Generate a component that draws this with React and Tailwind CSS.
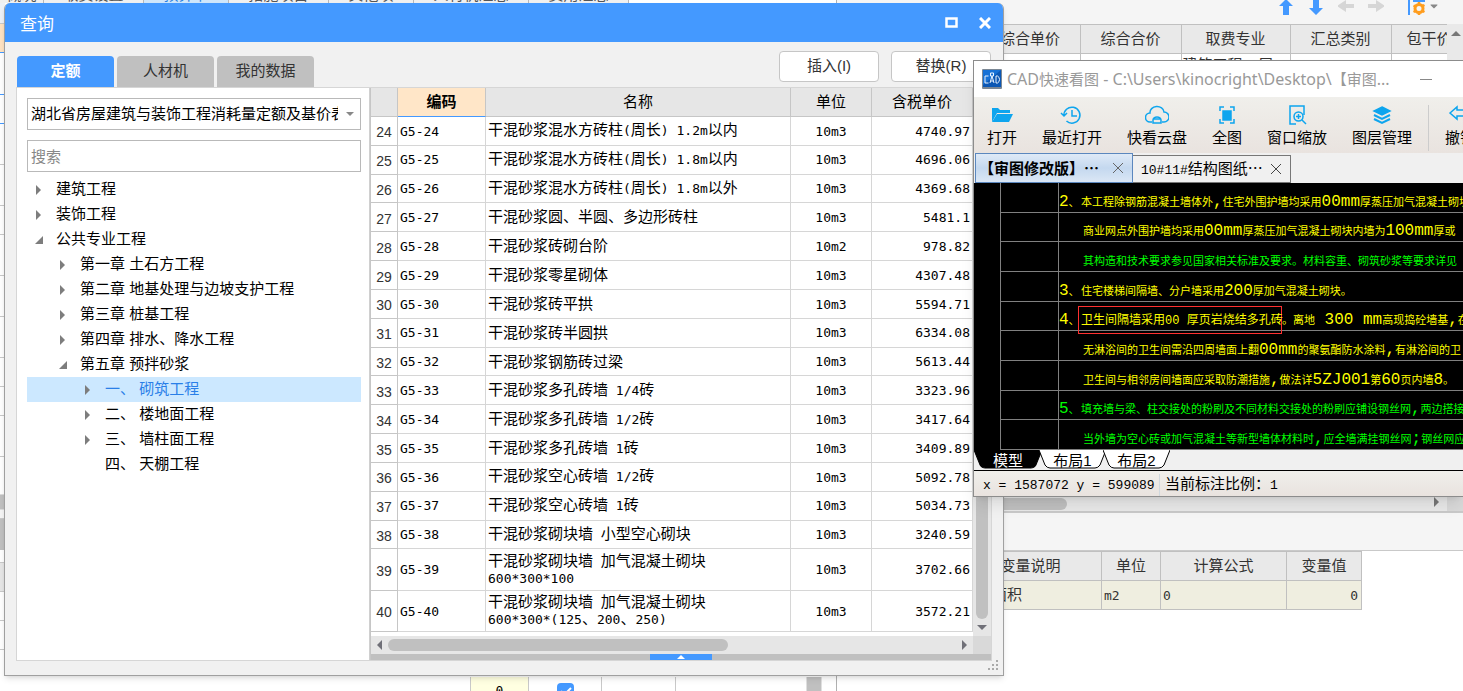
import { FaCaretDown } from "react-icons/fa";

const leftRows = [
  { h: "h-6", bg: "bg-[#eef1f6] border-[#c9c9c9]" },
  { h: "h-[29px]", bg: "bg-[#ffe3c2] border-[#4499ff]" },
  { h: "h-[42px]", bg: "bg-white border-[#4499ff]" },
  { h: "h-[29px]", bg: "bg-white border-[#4499ff]" },
  { h: "h-[41px]", bg: "bg-white border-[#c9c9c9]" },
  { h: "h-[41px]", bg: "bg-white border-[#c9c9c9]" },
  { h: "h-[29px]", bg: "bg-white border-[#c9c9c9]" },
  { h: "h-[41px]", bg: "bg-white border-[#c9c9c9]" },
  { h: "h-[41px]", bg: "bg-white border-[#c9c9c9]" },
  { h: "h-[41px]", bg: "bg-white border-[#c9c9c9]" },
  { h: "h-[29px]", bg: "bg-white border-[#c9c9c9]" },
  { h: "h-[29px]", bg: "bg-white border-[#c9c9c9]" },
  { h: "h-[41px]", bg: "bg-white border-[#c9c9c9]" },
  { h: "h-[38px]", bg: "bg-white border-[#dcdcdc]" },
  { h: "h-[15px]", bg: "bg-[#c0c0c0] border-[#dcdcdc]" },
  { h: "h-[9px]", bg: "bg-[#f5f5f5] border-[#c9c9c9]" },
  { h: "h-[31px]", bg: "bg-[#c0c0c0] border-[#c0c0c0]" },
  { h: "h-[13px]", bg: "bg-white border-[#c9c9c9]" },
  { h: "h-[29px]", bg: "bg-[#e6e6e6] border-[#c9c9c9]" },
  { h: "h-[29px]", bg: "bg-white border-[#c9c9c9]" },
  { h: "h-[29px]", bg: "bg-white border-[#c9c9c9]" },
  { h: "h-[29px]", bg: "bg-white border-[#c9c9c9]" },
];

const sheetTabs = [
  { name: "概况", w: "w-11" },
  { name: "取费设置", w: "w-[100px]" },
  { name: "预算书", w: "w-[85px]", active: true },
  { name: "措施项目", w: "w-[100px]" },
  { name: "其他项", w: "w-[85px]" },
  { name: "人材机汇总", w: "w-[115px]" },
  { name: "费用汇总", w: "w-[100px]" },
];

const tree = [
  { text: "建筑工程", level: 0, state: "closed" },
  { text: "装饰工程", level: 0, state: "closed" },
  { text: "公共专业工程", level: 0, state: "open" },
  { text: "第一章 土石方工程", level: 1, state: "closed" },
  { text: "第二章 地基处理与边坡支护工程", level: 1, state: "closed" },
  { text: "第三章 桩基工程", level: 1, state: "closed" },
  { text: "第四章 排水、降水工程", level: 1, state: "closed" },
  { text: "第五章 预拌砂浆", level: 1, state: "open" },
  { text: "一、 砌筑工程", level: 2, state: "closed", selected: true },
  { text: "二、 楼地面工程", level: 2, state: "closed" },
  { text: "三、 墙柱面工程", level: 2, state: "closed" },
  { text: "四、 天棚工程", level: 2, state: "leaf" },
];

const indents = ["pl-2", "pl-8", "pl-[57px]"];

const quotas = [
  [24, "G5-24", ["干混砂浆混水方砖柱(周长) 1.2m以内"], "10m3", "4740.97"],
  [25, "G5-25", ["干混砂浆混水方砖柱(周长) 1.8m以内"], "10m3", "4696.06"],
  [26, "G5-26", ["干混砂浆混水方砖柱(周长) 1.8m以外"], "10m3", "4369.68"],
  [27, "G5-27", ["干混砂浆圆、半圆、多边形砖柱"], "10m3", "5481.1"],
  [28, "G5-28", ["干混砂浆砖砌台阶"], "10m2", "978.82"],
  [29, "G5-29", ["干混砂浆零星砌体"], "10m3", "4307.48"],
  [30, "G5-30", ["干混砂浆砖平拱"], "10m3", "5594.71"],
  [31, "G5-31", ["干混砂浆砖半圆拱"], "10m3", "6334.08"],
  [32, "G5-32", ["干混砂浆钢筋砖过梁"], "10m3", "5613.44"],
  [33, "G5-33", ["干混砂浆多孔砖墙 1/4砖"], "10m3", "3323.96"],
  [34, "G5-34", ["干混砂浆多孔砖墙 1/2砖"], "10m3", "3417.64"],
  [35, "G5-35", ["干混砂浆多孔砖墙 1砖"], "10m3", "3409.89"],
  [36, "G5-36", ["干混砂浆空心砖墙 1/2砖"], "10m3", "5092.78"],
  [37, "G5-37", ["干混砂浆空心砖墙 1砖"], "10m3", "5034.73"],
  [38, "G5-38", ["干混砂浆砌块墙 小型空心砌块"], "10m3", "3240.59"],
  [39, "G5-39", ["干混砂浆砌块墙 加气混凝土砌块", "600*300*100"], "10m3", "3702.66"],
  [40, "G5-40", ["干混砂浆砌块墙 加气混凝土砌块", "600*300*(125、200、250)"], "10m3", "3572.21"],
];

const notes = [
  { no: "2、", text: "本工程除钢筋混凝土墙体外,住宅外围护墙均采用00mm厚蒸压加气混凝土砌块" },
  { text: "商业网点外围护墙均采用00mm厚蒸压加气混凝土砌块内墙为100mm厚或" },
  { text: "其构造和技术要求参见国家相关标准及要求。材料容重、砌筑砂浆等要求详见", green: true },
  { no: "3、", text: "住宅楼梯间隔墙、分户墙采用200厚加气混凝土砌块。" },
  { no: "4、", boxed: "卫生间隔墙采用00 厚页岩烧结多孔砖", text: "。离地 300 mm高现捣砼墙基,在" },
  { text: "无淋浴间的卫生间需沿四周墙面上翻00mm的聚氨酯防水涂料,有淋浴间的卫" },
  { text: "卫生间与相邻房间墙面应采取防潮措施,做法详5ZJ001第60页内墙8。" },
  { no: "5、", text: "填充墙与梁、柱交接处的粉刷及不同材料交接处的粉刷应铺设钢丝网,两边搭接", green: true },
  { text: "当外墙为空心砖或加气混凝土等新型墙体材料时,应全墙满挂钢丝网;钢丝网应", green: true },
];

// Latin runs are set in a monospace face, the rest in the CJK face
function Mixed({ text, className = "font-['DejaVu_Sans_Mono',monospace] text-[13px]" }) {
  return text.split(/([\x20-\x7e]+)/).map((part, i) =>
    i % 2 ? (
      <span key={i} className={`whitespace-pre ${className}`}>{part}</span>
    ) : (
      part
    )
  );
}

function Arrow({ className, d }) {
  return (
    <svg viewBox="0 0 16 16" className={`h-4 w-4 ${className}`} fill="currentColor">
      <path d={d} />
    </svg>
  );
}

function Workbook() {
  const head = "border-r border-b border-t border-[#c0c0c0] font-normal";
  return (
    <div className="flex h-full">
      <div className="flex w-[837px] shrink-0 flex-col border-r border-[#b0b0b0]">
        <div className="flex min-h-0 flex-1">
          <div className="w-[5px] shrink-0 overflow-hidden">
            {leftRows.map((r, i) => (
              <div key={i} className={`border-b ${r.h} ${r.bg}`} />
            ))}
          </div>
          <div className="-ml-[5px] flex h-[3px] overflow-hidden bg-[#f0f0f0] text-[15px]">
            {sheetTabs.map((t) => (
              <div key={t.name} className={`flex shrink-0 items-end justify-center border-r border-[#b8b8b8] ${t.w} ${t.active ? "bg-[#cfe6fb] text-[#2a7fe0]" : "text-[#555]"}`}>
                <span className="leading-4">{t.name}</span>
              </div>
            ))}
          </div>
        </div>
        <div className="flex h-[14px] overflow-hidden">
          <div className="w-[471px] border-r border-[#c9c9c9]" />
          <div className="w-[58px] border-r border-[#c9c9c9] bg-[#ffffe1] pt-1 text-center font-['DejaVu_Sans_Mono',monospace] text-[13px]">0</div>
          <div className="flex w-[73px] justify-center border-r border-[#c9c9c9] pt-[6px]">
            <label className="flex h-[17px] w-[17px] shrink-0 rounded-sm bg-[#4499ff]">
              <input type="checkbox" defaultChecked aria-label="汇总" className="peer sr-only" />
              <svg viewBox="0 0 17 17" className="h-[17px] w-[17px]" fill="none" stroke="white" strokeWidth="2">
                <path d="M4 8l3 4 7-7" />
              </svg>
            </label>
          </div>
          <div className="w-[74px] border-r border-[#c9c9c9]" />
          <div className="mr-[14px] ml-auto w-4 border-x border-[#e0e0e0] bg-[#c0c0c0]" />
        </div>
      </div>

      <div className="flex min-w-0 flex-1 flex-col">
        <div className="flex h-6 items-start justify-end bg-[#f5f5f5]">
          <Arrow className="mr-[14px] text-[#4499ff]" d="M8 -1L15 6H11V15H5V6H1z" />
          <Arrow className="mr-[14px] text-[#4499ff]" d="M8 15L15 8H11V-1H5V8H1z" />
          <Arrow className="mr-[14px] text-[#d6d6d6]" d="M-1 6L8 0V4H17V8H8V12z" />
          <Arrow className="mr-6 text-[#d6d6d6]" d="M17 6L8 0V4H-1V8H8V12z" />
          <svg viewBox="0 0 18 16" className="mr-1 h-4 w-[18px]">
            <path d="M1 0v15M5 1h12" stroke="#4499ff" strokeWidth="2" />
            <circle cx="11" cy="8.5" r="4" fill="none" stroke="#ff9d1e" strokeWidth="3" />
            <path d="M11 2v3M11 12v3M5.500 5.500l2 1M14.500 11l2 1M5.500 12l2-1M14.500 6l2-1" stroke="#ff9d1e" strokeWidth="2.500" />
          </svg>
          <FaCaretDown className="mr-[25px] h-3 w-2 text-[#888]" />
        </div>
        <div className="flex h-[473px] overflow-hidden">
          <div className="min-w-0 flex-1 overflow-hidden">
            <table className="w-[654px] table-fixed border-collapse text-[15px] text-[#333]">
              <thead>
                <tr className="h-[29px] bg-[#e9e9e9]">
                  <th className={`w-[143px] ${head}`} />
                  <th className={`w-[100px] ${head}`}>综合单价</th>
                  <th className={`w-[101px] ${head}`}>综合合价</th>
                  <th className={`w-[109px] ${head}`}>取费专业</th>
                  <th className={`w-[101px] ${head}`}>汇总类别</th>
                  <th className={`w-[100px] ${head} pr-6`}>包干价</th>
                </tr>
              </thead>
              <tbody>
                <tr className="h-[29px] align-top">
                  <td className="border-r border-[#c0c0c0]" />
                  <td className="border-r border-[#c0c0c0]" />
                  <td className="border-r border-[#c0c0c0]" />
                  <td className="border-r border-[#c0c0c0] px-px"><Mixed text="建筑工程12层" /></td>
                  <td className="border-r border-[#c0c0c0]" />
                  <td />
                </tr>
              </tbody>
            </table>
          </div>
          <div className="w-4 bg-[#e9e9e9] pt-[7px]">
            <svg viewBox="0 0 10 5" className="mx-1 h-[5px] w-[10px]"><path d="M0 5L5 0l5 5z" fill="#777" /></svg>
          </div>
        </div>
        <div className="flex h-[14px] bg-[#e9e9e9]">
          <div className="my-px w-[230px] rounded-r-full bg-[#c0c0c0]" />
          <svg viewBox="0 0 5 10" className="ml-auto mr-2 h-[10px] w-[5px]"><path d="M0 0l5 5-5 5z" fill="#777" /></svg>
          <div className="w-4 bg-[#d9d9d9]" />
        </div>
        <div className="h-10 border-t-2 border-b border-[#c9c9c9] bg-[#f5f5f5]" />
        <table className="w-[525px] table-fixed border-collapse text-[15px] text-[#333]">
          <thead>
            <tr className="h-[29px] bg-[#e9e9e9]">
              <th className={`w-[122px] ${head}`} />
              <th className={`w-[142px] ${head}`}>变量说明</th>
              <th className={`w-[59px] ${head}`}>单位</th>
              <th className={`w-[126px] ${head}`}>计算公式</th>
              <th className={`w-[75px] ${head}`}>变量值</th>
            </tr>
          </thead>
          <tbody>
            <tr className="h-[29px] bg-[#efeee0]">
              <td className="border border-[#c0c0c0]" />
              <td className="border border-[#c0c0c0] px-[2px]">建筑面积</td>
              <td className="border border-[#c0c0c0] px-[2px]"><Mixed text="m2" /></td>
              <td className="border border-[#c0c0c0] px-[2px]"><Mixed text="0" /></td>
              <td className="border border-[#c0c0c0] px-[3px] text-right"><Mixed text="0" /></td>
            </tr>
          </tbody>
        </table>
      </div>
    </div>
  );
}

function TreeItem({ item }) {
  return (
    <li className={`flex h-[25px] items-center text-[15px] ${indents[item.level]} ${item.selected ? "bg-[#cce8ff] text-[#2a7fe8]" : "text-black"}`}>
      <svg viewBox="0 0 10 10" className="mr-[11px] h-[10px] w-[10px] shrink-0" fill="#7d7d7d">
        {item.state === "closed" && <path d="M1 0l5 5-5 5z" />}
        {item.state === "open" && <path d="M8 1v8H0z" />}
      </svg>
      <span className="whitespace-pre">{item.text}</span>
    </li>
  );
}

function QueryDialog() {
  const th = "border-r border-b border-[#c6c6c6] font-normal";
  const td = "border-r border-b border-[#d6d6d6] px-[2px] py-0";
  return (
    <section className="absolute top-[3px] left-1 flex h-[673px] w-[1000px] flex-col overflow-hidden rounded-t-md border-r border-b border-l border-[#a0a0a0] bg-[#f1f1f1] shadow-md">
      <header className="flex h-[39px] shrink-0 items-center bg-[#4499ff] pr-3 pl-[15px] text-white">
        <h1 className="flex-1 pt-1 text-[17px]">查询</h1>
        <button aria-label="最大化" className="mr-[21px]">
          <svg viewBox="0 0 13 11" className="h-[11px] w-[13px]"><path d="M1.500 1.500h10v8h-10z" fill="none" stroke="white" strokeWidth="2.500" /></svg>
        </button>
        <button aria-label="关闭">
          <svg viewBox="0 0 12 12" className="h-3 w-3"><path d="M1 1l10 10M11 1L1 11" stroke="white" strokeWidth="3" /></svg>
        </button>
      </header>
      <div className="flex h-[45px] shrink-0 items-end pr-3 pl-3 text-[15px]">
        <button className="mr-[3px] h-[31px] w-[97px] rounded-t-sm bg-[#4499ff] font-bold text-white">定额</button>
        <button className="mr-[3px] h-[31px] w-[97px] rounded-t-sm bg-[#c0c0c0] text-[#333]">人材机</button>
        <button className="h-[31px] w-[97px] rounded-t-sm bg-[#c0c0c0] text-[#333]">我的数据</button>
        <button className="mr-3 mb-[5px] ml-auto h-[31px] w-[100px] rounded-sm border border-[#c6c6c6] bg-white text-[#333]">插入(I)</button>
        <button className="mb-[5px] h-[31px] w-[100px] rounded-sm border border-[#c6c6c6] bg-white text-[#333]">替换(R)</button>
      </div>
      <div className="mr-[11px] mb-[14px] ml-[11px] flex min-h-0 flex-1 border border-[#d6d6d6] bg-white">
        <div className="w-[353px] shrink-0 border-r border-[#d0d0d0] pt-[10px] pr-2 pl-[10px]">
          <div className="relative">
            <select aria-label="定额库" className="h-8 w-full appearance-none overflow-hidden border border-[#b9b9b9] bg-white pr-[22px] pl-[3px] text-[15px] text-black">
              <option>湖北省房屋建筑与装饰工程消耗量定额及基价表</option>
            </select>
            <svg viewBox="0 0 8 4" className="pointer-events-none absolute top-[14px] right-[7px] h-1 w-2"><path d="M0 0h8L4 4z" fill="#888" /></svg>
          </div>
          <input aria-label="搜索" placeholder="搜索" className="mt-[10px] block h-8 w-full border border-[#b9b9b9] bg-white px-[3px] text-[15px] placeholder:text-[#888]" />
          <ul className="mt-[5px]">
            {tree.map((item) => (
              <TreeItem key={item.text} item={item} />
            ))}
          </ul>
        </div>
        <div className="flex min-w-0 flex-1 flex-col border-l border-[#c6c6c6]">
          <div className="flex min-h-0 flex-1">
            <div className="min-w-0 flex-1 pb-1">
              <table className="h-full w-full table-fixed border-separate border-spacing-0 text-[15px] text-black">
                <thead>
                  <tr className="h-[29px] bg-[#e6e6e6]">
                    <th className={`w-[27px] ${th}`} />
                    <th className="w-[88px] border-r border-b border-r-[#c6c6c6] border-b-[#4499ff] bg-[#ffe6c8] font-bold">编码</th>
                    <th className={th}>名称</th>
                    <th className={`w-[81px] ${th}`}>单位</th>
                    <th className={`w-[101px] ${th}`}>含税单价</th>
                  </tr>
                </thead>
                <tbody>
                  {quotas.map(([no, code, name, unit, price]) => (
                    <tr key={no} className={name.length > 1 ? "h-10" : "h-7"}>
                      <td className="border-r border-b border-[#c6c6c6] px-0 pt-[3px] pb-0 text-center font-['Liberation_Sans',sans-serif] text-[14px] leading-5 text-[#333]">{no}</td>
                      <td className={td}><Mixed text={code} /></td>
                      <td className={td}>
                        {name.map((line) => (
                          <div key={line} className="leading-4 whitespace-nowrap"><Mixed text={line} /></div>
                        ))}
                      </td>
                      <td className={`${td} text-center`}><Mixed text={unit} /></td>
                      <td className={`${td} text-right`}><Mixed text={price} /></td>
                    </tr>
                  ))}
                </tbody>
              </table>
            </div>
            <div className="flex w-[18px] flex-col items-center bg-[#e6e6e6] pb-[6px]">
              <div className="mt-4 mb-[6px] w-3 flex-1 rounded-full bg-[#c0c0c0]" />
              <svg viewBox="0 0 10 5" className="h-[5px] w-[10px]"><path d="M0 0h10L5 5z" fill="#707078" /></svg>
            </div>
          </div>
          <div className="flex h-[18px] items-center bg-[#e6e6e6]">
            <svg viewBox="0 0 5 10" className="mx-[6px] h-[10px] w-[5px]"><path d="M5 0v10L0 5z" fill="#707078" /></svg>
            <div className="h-3 w-[340px] rounded-full bg-[#c0c0c0]" />
            <svg viewBox="0 0 5 10" className="mr-[6px] ml-auto h-[10px] w-[5px]"><path d="M0 0l5 5-5 5z" fill="#707078" /></svg>
            <div className="h-full w-[18px] bg-[#d9d9d9]" />
          </div>
          <button aria-label="展开" className="flex h-[6px] justify-center bg-[#c0c0c0]">
            <svg viewBox="0 0 62 6" className="h-[6px] w-[62px] bg-[#4499ff]"><path d="M27 5l4-4 4 4z" fill="white" /></svg>
          </button>
        </div>
      </div>
      <svg viewBox="0 0 11 11" className="absolute right-1 bottom-1 h-[11px] w-[11px]" fill="#aaa">
        <path d="M8 0h2v2H8zM4 4h2v2H4zM8 4h2v2H8zM0 8h2v2H0zM4 8h2v2H4zM8 8h2v2H8z" />
      </svg>
    </section>
  );
}

function Tool({ label, children }) {
  return (
    <button className="flex shrink-0 flex-col items-center text-[15px] leading-5 text-black">
      <svg viewBox="0 0 24 20" className="mb-[3px] h-5 w-6" fill="none" stroke="#0ea5ee" strokeWidth="1.500">
        {children}
      </svg>
      {label}
    </button>
  );
}

function SheetTab({ label, w, active }) {
  return (
    <button className={`relative -ml-[3px] h-[19px] text-[15px] leading-[22px] first:ml-0 ${w} ${active ? "text-white" : "text-black"}`}>
      <svg viewBox="0 0 67 19" preserveAspectRatio="none" className="absolute inset-0 h-full w-full" fill={active ? "black" : "white"} stroke="black">
        <path d="M0 0l6 15q2 3 5 3h45q3 0 5-3l6-15" />
      </svg>
      <span className="relative">{label}</span>
    </button>
  );
}

function CadNote({ note }) {
  const latin = "font-['Liberation_Mono',monospace] text-[16px]";
  return (
    <div className={`flex min-h-0 flex-1 text-[11px] leading-5 whitespace-nowrap ${note.green ? "text-[#00ff00]" : "text-[#ffff00]"}`}>
      <div className="w-[58px] shrink-0 border-r border-b border-[#808080]" />
      <div className="flex flex-1 items-end border-b border-[#808080]">
        <span className="w-[22px] shrink-0"><Mixed text={note.no || ""} className={latin} /></span>
        {note.boxed && (
          <span className="-mb-1 -ml-[3px] h-[28px] w-[204px] shrink-0 border border-[#ff3030] pl-[2px] text-[12px] leading-[26px]">
            <Mixed text={note.boxed} className="font-['Liberation_Mono',monospace] text-[12px]" />
          </span>
        )}
        <span className={note.no ? "" : "pl-[2px]"}><Mixed text={note.text} className={latin} /></span>
      </div>
    </div>
  );
}

function CadViewer() {
  return (
    <section className="absolute top-[60px] right-0 left-[973px] overflow-hidden border-t border-b border-l border-[#8c8c8c] bg-[#f0f0f0] shadow-lg">
      <header className="flex h-9 items-center bg-white pl-2 text-[#999]">
        <svg viewBox="0 0 20 20" className="mr-[5px] h-5 w-5 shrink-0">
          <rect width="20" height="20" rx="1" fill="#7b8794" />
          <rect x="1" y="1" width="18" height="17" fill="#0b57b4" />
          <path d="M1 1h18L1 16z" fill="#1671d6" />
          <path d="M6.500 7H3v7h3.500M8 14l2-7 2 7M8.500 12h3M14 7v7h1.500q2-1 2-3.500t-2-3.500zM8.500 4h3v3h-3z" fill="none" stroke="#e8f3ff" />
        </svg>
        <h2 className="text-[15px] leading-5 whitespace-nowrap">
          <Mixed text="CAD快速看图 - C:\Users\kinocright\Desktop\【审图..." className="font-['Noto_Sans',sans-serif] text-[16px]" />
        </h2>
        <button aria-label="最小化" className="mr-[31px] ml-auto h-px w-3 bg-[#888]" />
      </header>
      <div className="flex h-14 items-start gap-[25px] overflow-hidden bg-gradient-to-b from-[#f0efeb] to-[#e9e3df] pt-2 pl-[13px]">
        <Tool label="打开">
          <path d="M2 17V3h6l2 2h10v3H7L2 17z" fill="#0ea5ee" stroke="none" />
          <path d="M7 9h16l-4 8H2z" fill="#0ea5ee" stroke="none" />
        </Tool>
        <Tool label="最近打开">
          <path d="M4 11a8 8 0 1 1 2.500 5M1 8l3 3 3-3M12 5v6h5" />
        </Tool>
        <Tool label="快看云盘">
          <path d="M7 17H5a4.500 4.500 0 0 1 0-9 7 6 0 0 1 14-1 5 5 0 0 1 0 10h-2M8 18v-3a4 3 0 0 1 8 0v3zM8 14h8" />
        </Tool>
        <Tool label="全图">
          <path d="M8 6h8v9H8z" fill="#0ea5ee" />
          <path d="M5 6V2h4M15 2h4v4M5 14v4h4M15 18h4v-4" />
        </Tool>
        <Tool label="窗口缩放">
          <path d="M11 19H5V1h14v9" />
          <circle cx="13.500" cy="11.500" r="4.500" />
          <path d="M11 11.500h5M13.500 9v5M17 15l4 4" />
        </Tool>
        <Tool label="图层管理">
          <path d="M12 2l8 4-8 4-8-4z" fill="#0ea5ee" />
          <path d="M4 10l8 4 8-4M4 14l8 4 8-4" strokeWidth="2" />
        </Tool>
        <div className="-mx-[9px] h-[46px] w-px shrink-0 bg-[#ccc]" />
        <Tool label="撤销">
          <path d="M2 8l7-6v3h13v6H9v3z" />
        </Tool>
      </div>
      <div className="flex h-[30px] items-end pl-px font-['Noto_Sans_CJK_SC',sans-serif] text-[15px] text-black">
        <div className="flex h-[30px] w-[158px] items-center border border-[#5b87be] bg-gradient-to-b from-[#dfeaf7] via-[#c4d8ef] to-[#dbe7f5] pr-[9px] pl-[3px] font-bold">
          <button className="flex-1 text-left whitespace-nowrap">【审图修改版】…</button>
          <button aria-label="关闭标签" className="shrink-0">
            <svg viewBox="0 0 10 10" className="h-[10px] w-[10px]" stroke="#666"><path d="M0 0l10 10M10 0L0 10" /></svg>
          </button>
        </div>
        <div className="flex h-7 w-[158px] items-center border border-l-0 border-[#777] pr-[9px] pl-2">
          <button className="flex-1 text-left leading-5 whitespace-nowrap"><Mixed text="10#11#结构图纸…" className="font-['Liberation_Mono',monospace] text-[13px]" /></button>
          <button aria-label="关闭标签" className="shrink-0">
            <svg viewBox="0 0 10 10" className="h-[10px] w-[10px]" stroke="#444"><path d="M0 0l10 10M10 0L0 10" /></svg>
          </button>
        </div>
      </div>
      <div className="h-[267px] bg-black pl-[26px]">
        <div className="flex h-full flex-col border-l border-[#808080]">
          {notes.map((n) => (
            <CadNote key={n.text} note={n} />
          ))}
        </div>
      </div>
      <div className="flex h-[21px] border-b border-black">
        <SheetTab label="模型" w="w-[68px]" active />
        <SheetTab label="布局1" w="w-[67px]" />
        <SheetTab label="布局2" w="w-[67px]" />
      </div>
      <footer className="flex h-[25px] items-center bg-gradient-to-b from-[#f0efeb] to-[#e9e3df] pt-[2px] pl-[9px] text-[15px] leading-5 text-black">
        <span className="w-[177px] border-r border-[#d0d8de]"><Mixed text="x = 1587072 y = 599089" className="font-['Liberation_Mono',monospace] text-[13px]" /></span>
        <span className="pl-[5px]"><Mixed text="当前标注比例：1" className="font-['Liberation_Mono',monospace] text-[13px]" /></span>
      </footer>
    </section>
  );
}

export default function App() {
  return (
    <main className="relative h-screen overflow-hidden bg-white font-['Liberation_Sans','Noto_Sans_CJK_SC',sans-serif]">
      <Workbook />
      <QueryDialog />
      <CadViewer />
    </main>
  );
}
